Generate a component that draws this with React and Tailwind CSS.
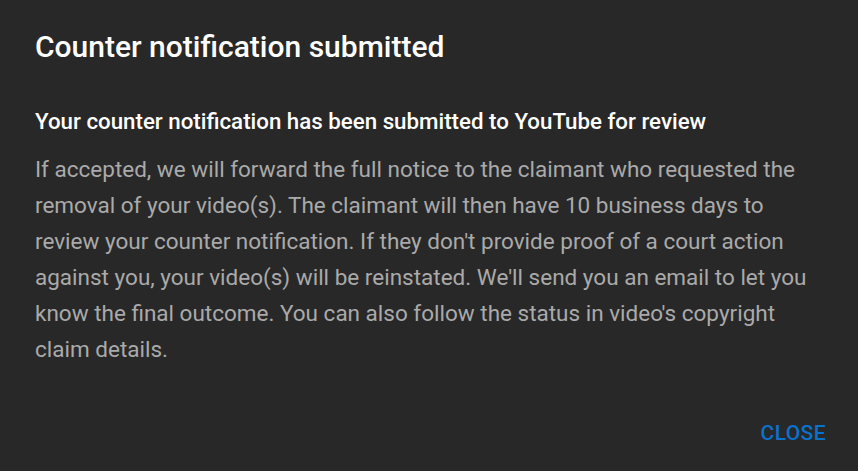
import React from 'react';

function CounterDialog() {
  return (
    <div
      className="w-[858px] h-[471px] bg-[#282828] flex flex-col overflow-hidden"
      style={{ fontFamily: 'Roboto, "Liberation Sans", sans-serif' }}
    >
      <div className="px-[35px] pt-[29px]">
        <h1 className="text-[30px] leading-[36px] font-medium text-white">
          Counter notification submitted
        </h1>
      </div>

      <div className="pl-[35px] pr-[38px] pt-[41px] flex-1">
        <h2 className="text-[22.3px] leading-[30px] font-medium text-white">
          Your counter notification has been submitted to YouTube for review
        </h2>
        <p className="mt-[15px] text-[22.5px] leading-[36px] text-[#aaaaaa]">
          If accepted, we will forward the full notice to the claimant who requested the
          removal of your video(s). The claimant will then have 10 business days to
          review your counter notification. If they don't provide proof of a court action
          against you, your video(s) will be reinstated. We'll send you an email to let you
          know the final outcome. You can also follow the status in video's copyright
          claim details.
        </p>
      </div>

      <div className="flex justify-end px-[32px] pb-[24px]">
        <button className="text-[21px] leading-[28px] font-medium text-[#0b72cc] tracking-[0.4px]">
          CLOSE
        </button>
      </div>
    </div>
  );
}

export default function App() {
  return <CounterDialog />;
}
